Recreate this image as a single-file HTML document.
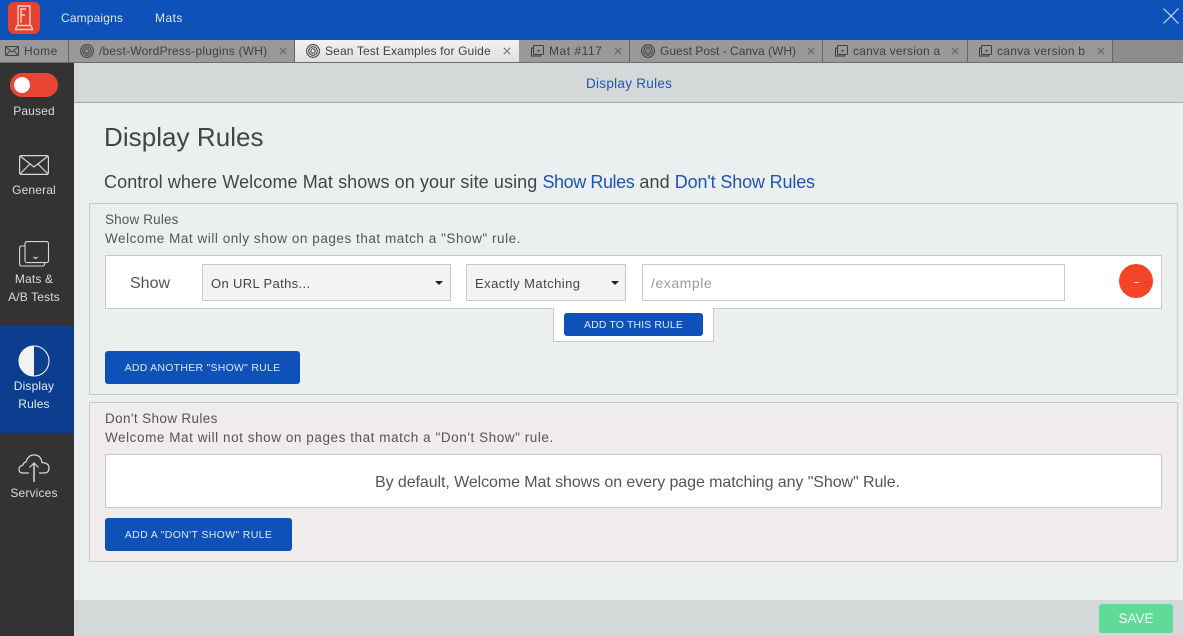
<!DOCTYPE html>
<html><head><meta charset="utf-8"><title>Display Rules</title>
<style>
html,body{margin:0;padding:0}
body{width:1183px;height:636px;overflow:hidden;position:relative;background:#ebeff0;font-family:"Liberation Sans",sans-serif;color:#555}
.a{position:absolute;box-sizing:border-box}
.t{position:absolute;white-space:nowrap;line-height:1}
.tab{position:absolute;top:40px;height:22px;background:#999;border-right:1px solid #666;box-sizing:border-box}
.tt{position:absolute;top:45px;font-size:12px;color:#404040;white-space:nowrap;line-height:13px}
.x{position:absolute;top:47px}
.btn{position:absolute;box-sizing:border-box;background:#0e51b8;border-radius:3px;color:#dfe8f7;font-size:10.5px;text-align:center;white-space:nowrap;padding-top:1px}
.s{position:absolute;text-align:center;color:#dcdcdc;font-size:12px;width:68px;left:0;letter-spacing:.15px;line-height:18px}
</style></head><body>
<div class="a" style="left:0;top:0;width:1183px;height:40px;background:#0e51b8"></div>
<svg class="a" style="left:8px;top:2px" width="32" height="32" viewBox="0 0 32 32"><rect width="32" height="32" rx="6" fill="#e5432f"/><path d="M10 23V4h12v19M13 6v15M13 7h5M13 13h4M9 23.500h14l1.500 4H7.500z" fill="none" stroke="#f6cfc7" stroke-width="1.400"/></svg>
<div class="t" style="left:61px;top:12px;font-size:12px;letter-spacing:.15px;color:#dce7f7">Campaigns</div>
<div class="t" style="left:155px;top:12px;font-size:12px;letter-spacing:.45px;color:#dce7f7">Mats</div>
<svg class="a" style="left:1163px;top:8px" width="16" height="16"><path d="M.5.5l15 15M15.500.5l-15 15" stroke="#d6e2f5" stroke-width="1.100"/></svg>

<div class="a" style="left:0;top:40px;width:1183px;height:23px;background:#8c8c8c"></div>
<div class="tab" style="left:0;width:69px"></div>
<div class="tab" style="left:69px;width:226px"></div>
<div class="tab" style="left:295px;width:224px;background:linear-gradient(#f2f2f2,#e0e0e0);border-right:0"></div>
<div class="tab" style="left:519px;width:111px"></div>
<div class="tab" style="left:630px;width:193px"></div>
<div class="tab" style="left:823px;width:145px"></div>
<div class="tab" style="left:968px;width:145px"></div>
<div class="a" style="left:0;top:62px;width:1183px;height:1px;background:#6e6e6e"></div>

<svg class="a" style="left:5px;top:45px" width="15" height="12" fill="none" stroke="#404040"><rect x=".5" y="1.500" width="13" height="9" rx="1"/><path d="M1 2l6 5 6-5M1 10l4-4M13 10l-4-4"/></svg>
<div class="tt" style="left:24px;letter-spacing:.45px">Home</div>
<svg class="a" style="left:80px;top:44px" width="14" height="14" fill="none" stroke="#444" stroke-width="1.100"><circle cx="7" cy="7" r="6.400"/><circle cx="7" cy="7" r="4.300"/><circle cx="7" cy="7" r="2.200"/></svg>
<div class="tt" style="left:99px;letter-spacing:.21px">/best-WordPress-plugins (WH)</div>
<svg class="x" style="left:279px" width="8" height="8"><path d="M.8.8l6.400 6.400M7.200.8L.8 7.200" stroke="#666" stroke-width="1.100"/></svg>
<svg class="a" style="left:306px;top:44px" width="14" height="14" fill="none" stroke="#444" stroke-width="1.100"><circle cx="7" cy="7" r="6.400"/><circle cx="7" cy="7" r="4.300"/><circle cx="7" cy="7" r="2.200"/></svg>
<div class="tt" style="left:325px;letter-spacing:.14px">Sean Test Examples for Guide</div>
<svg class="x" style="left:503px" width="8" height="8"><path d="M.8.8l6.400 6.400M7.200.8L.8 7.200" stroke="#777" stroke-width="1.100"/></svg>
<svg class="a" style="left:530px;top:44px" width="15" height="14" fill="none" stroke="#404040"><rect x="3.500" y="1.500" width="10" height="9" rx="1"/><path d="M3 4H1.500v8h9v-1.500"/><path d="M7 6h3l-1.500 2z" fill="#404040" stroke="none"/></svg>
<div class="tt" style="left:549px;letter-spacing:.53px">Mat #117</div>
<svg class="x" style="left:614px" width="8" height="8"><path d="M.8.8l6.400 6.400M7.200.8L.8 7.200" stroke="#666" stroke-width="1.100"/></svg>
<svg class="a" style="left:641px;top:44px" width="14" height="14" fill="none" stroke="#444" stroke-width="1.100"><circle cx="7" cy="7" r="6.400"/><circle cx="7" cy="7" r="4.300"/><circle cx="7" cy="7" r="2.200"/></svg>
<div class="tt" style="left:660px;letter-spacing:0">Guest Post - Canva (WH)</div>
<svg class="x" style="left:807px" width="8" height="8"><path d="M.8.8l6.400 6.400M7.200.8L.8 7.200" stroke="#666" stroke-width="1.100"/></svg>
<svg class="a" style="left:834px;top:44px" width="15" height="14" fill="none" stroke="#404040"><rect x="3.500" y="1.500" width="10" height="9" rx="1"/><path d="M3 4H1.500v8h9v-1.500"/><path d="M7 6h3l-1.500 2z" fill="#404040" stroke="none"/></svg>
<div class="tt" style="left:853px;letter-spacing:.22px">canva version a</div>
<svg class="x" style="left:951px" width="8" height="8"><path d="M.8.8l6.400 6.400M7.200.8L.8 7.200" stroke="#666" stroke-width="1.100"/></svg>
<svg class="a" style="left:978px;top:44px" width="15" height="14" fill="none" stroke="#404040"><rect x="3.500" y="1.500" width="10" height="9" rx="1"/><path d="M3 4H1.500v8h9v-1.500"/><path d="M7 6h3l-1.500 2z" fill="#404040" stroke="none"/></svg>
<div class="tt" style="left:997px;letter-spacing:.28px">canva version b</div>
<svg class="x" style="left:1097px" width="8" height="8"><path d="M.8.8l6.400 6.400M7.200.8L.8 7.200" stroke="#666" stroke-width="1.100"/></svg>

<!-- sidebar -->
<div class="a" style="left:0;top:63px;width:74px;height:573px;background:#333"></div>
<div class="a" style="left:10px;top:73px;width:48px;height:24px;border-radius:12px;background:#ea4534"></div>
<div class="a" style="left:14px;top:77px;width:16px;height:16px;border-radius:50%;background:#fff"></div>
<div class="s" style="top:102px">Paused</div>
<svg class="a" style="left:19px;top:155px" width="30" height="20" fill="none" stroke="#d8d8d8" stroke-width="1.200"><rect x=".6" y=".6" width="28.800" height="18.800" rx="1.500"/><path d="M1 1l14 11L29 1M1 19l10-10M29 19L19 9"/></svg>
<div class="s" style="top:181px">General</div>
<svg class="a" style="left:19px;top:241px" width="31" height="27" fill="none" stroke="#d8d8d8" stroke-width="1.100"><rect x="6" y=".6" width="23.500" height="21" rx="2"/><path d="M6 5H2.500Q.6 5 .6 7v16q0 2 2 2h21q2 0 2-2v-1.500M14.500 16l2 1.500 2-1.500"/></svg>
<div class="s" style="top:270px">Mats &amp;</div>
<div class="s" style="top:288px">A/B Tests</div>
<div class="a" style="left:0;top:326px;width:74px;height:107px;background:#0c3e8f"></div>
<svg class="a" style="left:18px;top:345px" width="32" height="32"><circle cx="16" cy="16" r="15" fill="#0c3e8f" stroke="#fff" stroke-width="1"/><path d="M16 1a15 15 0 0 0 0 30z" fill="#f2f2f2"/></svg>
<div class="s" style="top:377px;color:#e4eaf5">Display</div>
<div class="s" style="top:395px;color:#e4eaf5">Rules</div>
<svg class="a" style="left:18px;top:453px" width="32" height="30" fill="none" stroke="#d8d8d8" stroke-width="1.200"><path d="M11 20H5q-4 0-4-3.500T5 12q1-3 3-3 2-7 8-7 7 0 8 7.500 7 .5 7 5.500 0 5-5 5h-5"/><path d="M16 29V10" stroke-width="1.500"/><path d="M11.500 14.500l4.500-4.500 4.500 4.500"/></svg>
<div class="s" style="top:484px">Services</div>

<!-- header -->
<div class="a" style="left:74px;top:63px;width:1109px;height:40px;background:#d4d8d9;border-bottom:1px solid #a8a8a8"></div>
<div class="t" style="left:586px;top:77px;font-size:13.500px;letter-spacing:.28px;color:#1d55b2">Display Rules</div>
<div class="t" style="left:104px;top:124px;font-size:26px;color:#444;letter-spacing:.05px">Display Rules</div>
<div class="t" style="left:104px;top:173px;font-size:18px;color:#444;letter-spacing:.09px">Control where Welcome Mat shows on your site using <span style="color:#1d55b2;letter-spacing:-.42px">Show Rules</span> and <span style="color:#1d55b2;letter-spacing:-.15px">Don't Show Rules</span></div>

<!-- Show -->
<div class="a" style="left:89px;top:203px;width:1089px;height:192px;background:#ebf0ed;border:1px solid #c8c8c8"></div>
<div class="t" style="left:105px;top:213px;font-size:13.500px;letter-spacing:.15px">Show Rules</div>
<div class="t" style="left:105px;top:232px;font-size:13.500px;letter-spacing:.54px">Welcome Mat will only show on pages that match a "Show" rule.</div>
<div class="a" style="left:105px;top:255px;width:1057px;height:54px;background:#fff;border:1px solid #c8c8c8"></div>
<div class="t" style="left:130px;top:276px;font-size:16px;letter-spacing:0">Show</div>
<div class="a" style="left:202px;top:264px;width:249px;height:37px;background:#f3f3f3;border:1px solid #c8c8c8"></div>
<div class="t" style="left:211px;top:277px;font-size:13px;letter-spacing:.35px;color:#444">On URL Paths...</div>
<div class="a" style="left:435px;top:281px;border:4px solid transparent;border-top:4px solid #222;border-bottom:0"></div>
<div class="a" style="left:466px;top:264px;width:160px;height:37px;background:#f3f3f3;border:1px solid #c8c8c8"></div>
<div class="t" style="left:475px;top:277px;font-size:13px;letter-spacing:.45px;color:#444">Exactly Matching</div>
<div class="a" style="left:611px;top:281px;border:4px solid transparent;border-top:4px solid #222;border-bottom:0"></div>
<div class="a" style="left:642px;top:264px;width:423px;height:37px;background:#fff;border:1px solid #c8c8c8"></div>
<div class="t" style="left:651px;top:276px;font-size:14px;letter-spacing:.55px;color:#999">/example</div>
<div class="a" style="left:1119px;top:264px;width:34px;height:34px;border-radius:50%;background:#f34425"></div>
<div class="a" style="left:1134px;top:281.500px;width:5px;height:1.500px;background:#f5d9d0"></div>
<div class="a" style="left:553px;top:308px;width:161px;height:34px;background:#fff;border:1px solid #c8c8c8;border-top:0"></div>
<div class="btn" style="left:564px;top:313px;width:139px;height:23px;line-height:22px;letter-spacing:.13px">ADD TO THIS RULE</div>
<div class="btn" style="left:105px;top:351px;width:195px;height:33px;line-height:32px;letter-spacing:.26px">ADD ANOTHER "SHOW" RULE</div>

<!-- Don't show -->
<div class="a" style="left:89px;top:402px;width:1089px;height:160px;background:#f0eceb;border:1px solid #c8c8c8"></div>
<div class="t" style="left:105px;top:412px;font-size:13.500px;letter-spacing:.37px">Don't Show Rules</div>
<div class="t" style="left:105px;top:431px;font-size:13.500px;letter-spacing:.56px">Welcome Mat will not show on pages that match a "Don't Show" rule.</div>
<div class="a" style="left:105px;top:454px;width:1057px;height:54px;background:#fff;border:1px solid #c8c8c8"></div>
<div class="t" style="left:375px;top:475px;font-size:16px;letter-spacing:-.08px">By default, Welcome Mat shows on every page matching any "Show" Rule.</div>
<div class="btn" style="left:105px;top:518px;width:187px;height:33px;line-height:32px;letter-spacing:.35px">ADD A "DON'T SHOW" RULE</div>

<!-- footer -->
<div class="a" style="left:74px;top:600px;width:1109px;height:36px;background:#d4d8d9"></div>
<div class="a" style="left:1099px;top:604px;width:74px;height:29px;background:#5fdb97;border-radius:3px;color:#f6fffa;font-size:13.500px;text-align:center;line-height:29px">SAVE</div>
</body></html>
